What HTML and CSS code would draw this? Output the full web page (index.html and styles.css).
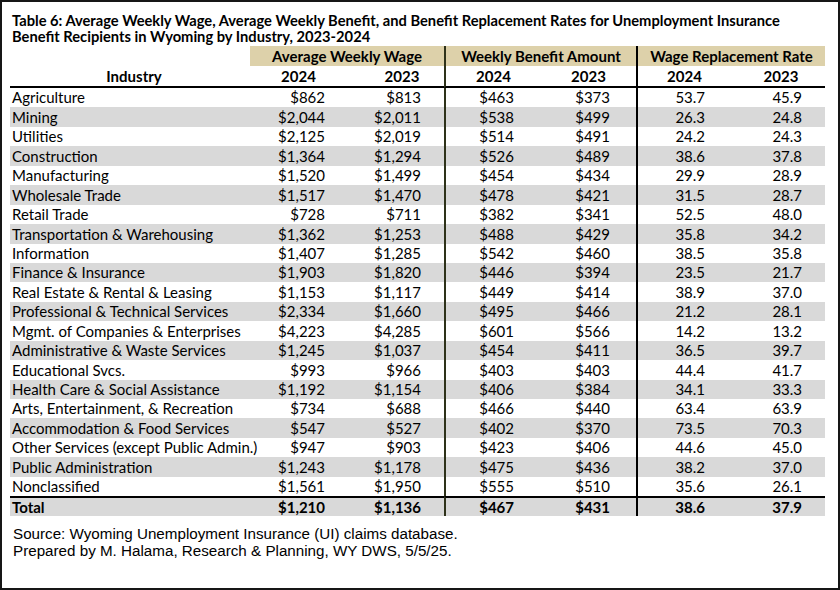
FILE: index.html
```html
<!DOCTYPE html>
<html lang="en">
<head>
<meta charset="utf-8">
<title>Table 6</title>
<link rel="stylesheet" href="styles.css">
</head>
<body>
<div class="frame">
  <h1 class="title">Table 6: Average Weekly Wage, Average Weekly Benefit, and Benefit Replacement Rates for Unemployment Insurance Benefit Recipients in Wyoming by Industry, 2023-2024</h1>
  <table class="data">
    <colgroup>
      <col class="c-ind"><col class="c-w1"><col class="c-w2"><col class="c-b1"><col class="c-b2"><col class="c-r1"><col class="c-r2">
    </colgroup>
    <thead>
      <tr class="group">
        <th class="blank"></th>
        <th colspan="2" class="band">Average Weekly Wage</th>
        <th colspan="2" class="band vl-olive">Weekly Benefit Amount</th>
        <th colspan="2" class="band vl-black">Wage Replacement Rate</th>
      </tr>
      <tr class="years">
        <th class="ind-h">Industry</th>
        <th class="y y-w1">2024</th>
        <th class="y y-w2">2023</th>
        <th class="y y-b1 vl-olive">2024</th>
        <th class="y y-b2">2023</th>
        <th class="y y-r1 vl-black">2024</th>
        <th class="y y-r2">2023</th>
      </tr>
    </thead>
    <tbody>
      <tr><td class="ind">Agriculture</td><td class="n w1">$862</td><td class="n w2">$813</td><td class="n b1 vl-olive">$463</td><td class="n b2">$373</td><td class="n r1 vl-black">53.7</td><td class="n r2">45.9</td></tr>
      <tr><td class="ind">Mining</td><td class="n w1">$2,044</td><td class="n w2">$2,011</td><td class="n b1 vl-olive">$538</td><td class="n b2">$499</td><td class="n r1 vl-black">26.3</td><td class="n r2">24.8</td></tr>
      <tr><td class="ind">Utilities</td><td class="n w1">$2,125</td><td class="n w2">$2,019</td><td class="n b1 vl-olive">$514</td><td class="n b2">$491</td><td class="n r1 vl-black">24.2</td><td class="n r2">24.3</td></tr>
      <tr><td class="ind">Construction</td><td class="n w1">$1,364</td><td class="n w2">$1,294</td><td class="n b1 vl-olive">$526</td><td class="n b2">$489</td><td class="n r1 vl-black">38.6</td><td class="n r2">37.8</td></tr>
      <tr><td class="ind">Manufacturing</td><td class="n w1">$1,520</td><td class="n w2">$1,499</td><td class="n b1 vl-olive">$454</td><td class="n b2">$434</td><td class="n r1 vl-black">29.9</td><td class="n r2">28.9</td></tr>
      <tr><td class="ind">Wholesale Trade</td><td class="n w1">$1,517</td><td class="n w2">$1,470</td><td class="n b1 vl-olive">$478</td><td class="n b2">$421</td><td class="n r1 vl-black">31.5</td><td class="n r2">28.7</td></tr>
      <tr><td class="ind">Retail Trade</td><td class="n w1">$728</td><td class="n w2">$711</td><td class="n b1 vl-olive">$382</td><td class="n b2">$341</td><td class="n r1 vl-black">52.5</td><td class="n r2">48.0</td></tr>
      <tr><td class="ind">Transportation &amp; Warehousing</td><td class="n w1">$1,362</td><td class="n w2">$1,253</td><td class="n b1 vl-olive">$488</td><td class="n b2">$429</td><td class="n r1 vl-black">35.8</td><td class="n r2">34.2</td></tr>
      <tr><td class="ind">Information</td><td class="n w1">$1,407</td><td class="n w2">$1,285</td><td class="n b1 vl-olive">$542</td><td class="n b2">$460</td><td class="n r1 vl-black">38.5</td><td class="n r2">35.8</td></tr>
      <tr><td class="ind">Finance &amp; Insurance</td><td class="n w1">$1,903</td><td class="n w2">$1,820</td><td class="n b1 vl-olive">$446</td><td class="n b2">$394</td><td class="n r1 vl-black">23.5</td><td class="n r2">21.7</td></tr>
      <tr><td class="ind">Real Estate &amp; Rental &amp; Leasing</td><td class="n w1">$1,153</td><td class="n w2">$1,117</td><td class="n b1 vl-olive">$449</td><td class="n b2">$414</td><td class="n r1 vl-black">38.9</td><td class="n r2">37.0</td></tr>
      <tr><td class="ind">Professional &amp; Technical Services</td><td class="n w1">$2,334</td><td class="n w2">$1,660</td><td class="n b1 vl-olive">$495</td><td class="n b2">$466</td><td class="n r1 vl-black">21.2</td><td class="n r2">28.1</td></tr>
      <tr><td class="ind">Mgmt. of Companies &amp; Enterprises</td><td class="n w1">$4,223</td><td class="n w2">$4,285</td><td class="n b1 vl-olive">$601</td><td class="n b2">$566</td><td class="n r1 vl-black">14.2</td><td class="n r2">13.2</td></tr>
      <tr><td class="ind">Administrative &amp; Waste Services</td><td class="n w1">$1,245</td><td class="n w2">$1,037</td><td class="n b1 vl-olive">$454</td><td class="n b2">$411</td><td class="n r1 vl-black">36.5</td><td class="n r2">39.7</td></tr>
      <tr><td class="ind">Educational Svcs.</td><td class="n w1">$993</td><td class="n w2">$966</td><td class="n b1 vl-olive">$403</td><td class="n b2">$403</td><td class="n r1 vl-black">44.4</td><td class="n r2">41.7</td></tr>
      <tr><td class="ind">Health Care &amp; Social Assistance</td><td class="n w1">$1,192</td><td class="n w2">$1,154</td><td class="n b1 vl-olive">$406</td><td class="n b2">$384</td><td class="n r1 vl-black">34.1</td><td class="n r2">33.3</td></tr>
      <tr><td class="ind">Arts, Entertainment, &amp; Recreation</td><td class="n w1">$734</td><td class="n w2">$688</td><td class="n b1 vl-olive">$466</td><td class="n b2">$440</td><td class="n r1 vl-black">63.4</td><td class="n r2">63.9</td></tr>
      <tr><td class="ind">Accommodation &amp; Food Services</td><td class="n w1">$547</td><td class="n w2">$527</td><td class="n b1 vl-olive">$402</td><td class="n b2">$370</td><td class="n r1 vl-black">73.5</td><td class="n r2">70.3</td></tr>
      <tr><td class="ind">Other Services (except Public Admin.)</td><td class="n w1">$947</td><td class="n w2">$903</td><td class="n b1 vl-olive">$423</td><td class="n b2">$406</td><td class="n r1 vl-black">44.6</td><td class="n r2">45.0</td></tr>
      <tr><td class="ind">Public Administration</td><td class="n w1">$1,243</td><td class="n w2">$1,178</td><td class="n b1 vl-olive">$475</td><td class="n b2">$436</td><td class="n r1 vl-black">38.2</td><td class="n r2">37.0</td></tr>
      <tr><td class="ind">Nonclassified</td><td class="n w1">$1,561</td><td class="n w2">$1,950</td><td class="n b1 vl-olive">$555</td><td class="n b2">$510</td><td class="n r1 vl-black">35.6</td><td class="n r2">26.1</td></tr>
      <tr class="total"><td class="ind">Total</td><td class="n w1">$1,210</td><td class="n w2">$1,136</td><td class="n b1 vl-olive">$467</td><td class="n b2">$431</td><td class="n r1 vl-black">38.6</td><td class="n r2">37.9</td></tr>
    </tbody>
  </table>
  <p class="note">Source: Wyoming Unemployment Insurance (UI) claims database.<br>Prepared by M. Halama, Research &amp; Planning, WY DWS, 5/5/25.</p>
</div>
</body>
</html>
```

FILE: styles.css
```css
* { box-sizing: border-box; }

html, body {
  margin: 0;
  padding: 0;
  background: #ffffff;
}

.frame {
  width: 840px;
  height: 590px;
  border: 2px solid #161616;
  padding: 10px 12px 0 8px;
  color: #000;
  font-family: "Lato", "Liberation Sans", sans-serif;
}

.title {
  margin: 0;
  padding-left: 2px;
  font-size: 14.7px;
  line-height: 16px;
  font-weight: 700;
}

.data {
  margin-top: 2px;
  width: 815px;
  table-layout: fixed;
  border-collapse: separate;
  border-spacing: 0;
  font-size: 15px;
}

.c-ind { width: 240px; }
.c-w1 { width: 97px; }
.c-w2 { width: 97px; }
.c-b1 { width: 97px; }
.c-b2 { width: 95px; }
.c-r1 { width: 95px; }
.c-r2 { width: 94px; }

.data th, .data td {
  padding: 0;
  white-space: nowrap;
}

.group th {
  height: 20px;
  font-weight: 700;
  text-align: center;
  line-height: 20px;
}

.group .band {
  background: #ddd1aa;
}

.group .blank { background: transparent; }

.years th {
  height: 22px;
  font-weight: 700;
  text-align: center;
  line-height: 20px;
  border-bottom: 2px solid #000;
}

.years .ind-h { padding-left: 8px; }
.years .y-w2 { padding-left: 13px; }
.years .y-r2 { padding-left: 6px; }

.data tbody td {
  height: 19.45px;
  line-height: 17px;
  padding-top: 0.5px;
  vertical-align: middle;
}

.data tbody tr:nth-child(even) td {
  background: #d9d9d9;
}

.ind {
  padding-left: 2px !important;
  text-align: left;
}

.n { text-align: right; }
.w1 { padding-right: 22px !important; }
.w2 { padding-right: 23px !important; }
.b1 { padding-right: 27px !important; }
.b2 { padding-right: 26px !important; }
.r1 { padding-right: 26px !important; }
.r2 { padding-right: 23px !important; }

.vl-olive { border-left: 2px solid #2e321a; }
.vl-black { border-left: 2px solid #000; }

.total td {
  font-weight: 700;
  border-top: 2px solid #000;
  height: 19.5px !important;
}

.note {
  margin: 9px 0 0 0;
  padding-left: 3px;
  font-family: "Liberation Sans", "Open Sans", sans-serif;
  font-size: 15.2px;
  line-height: 17.5px;
}
```
